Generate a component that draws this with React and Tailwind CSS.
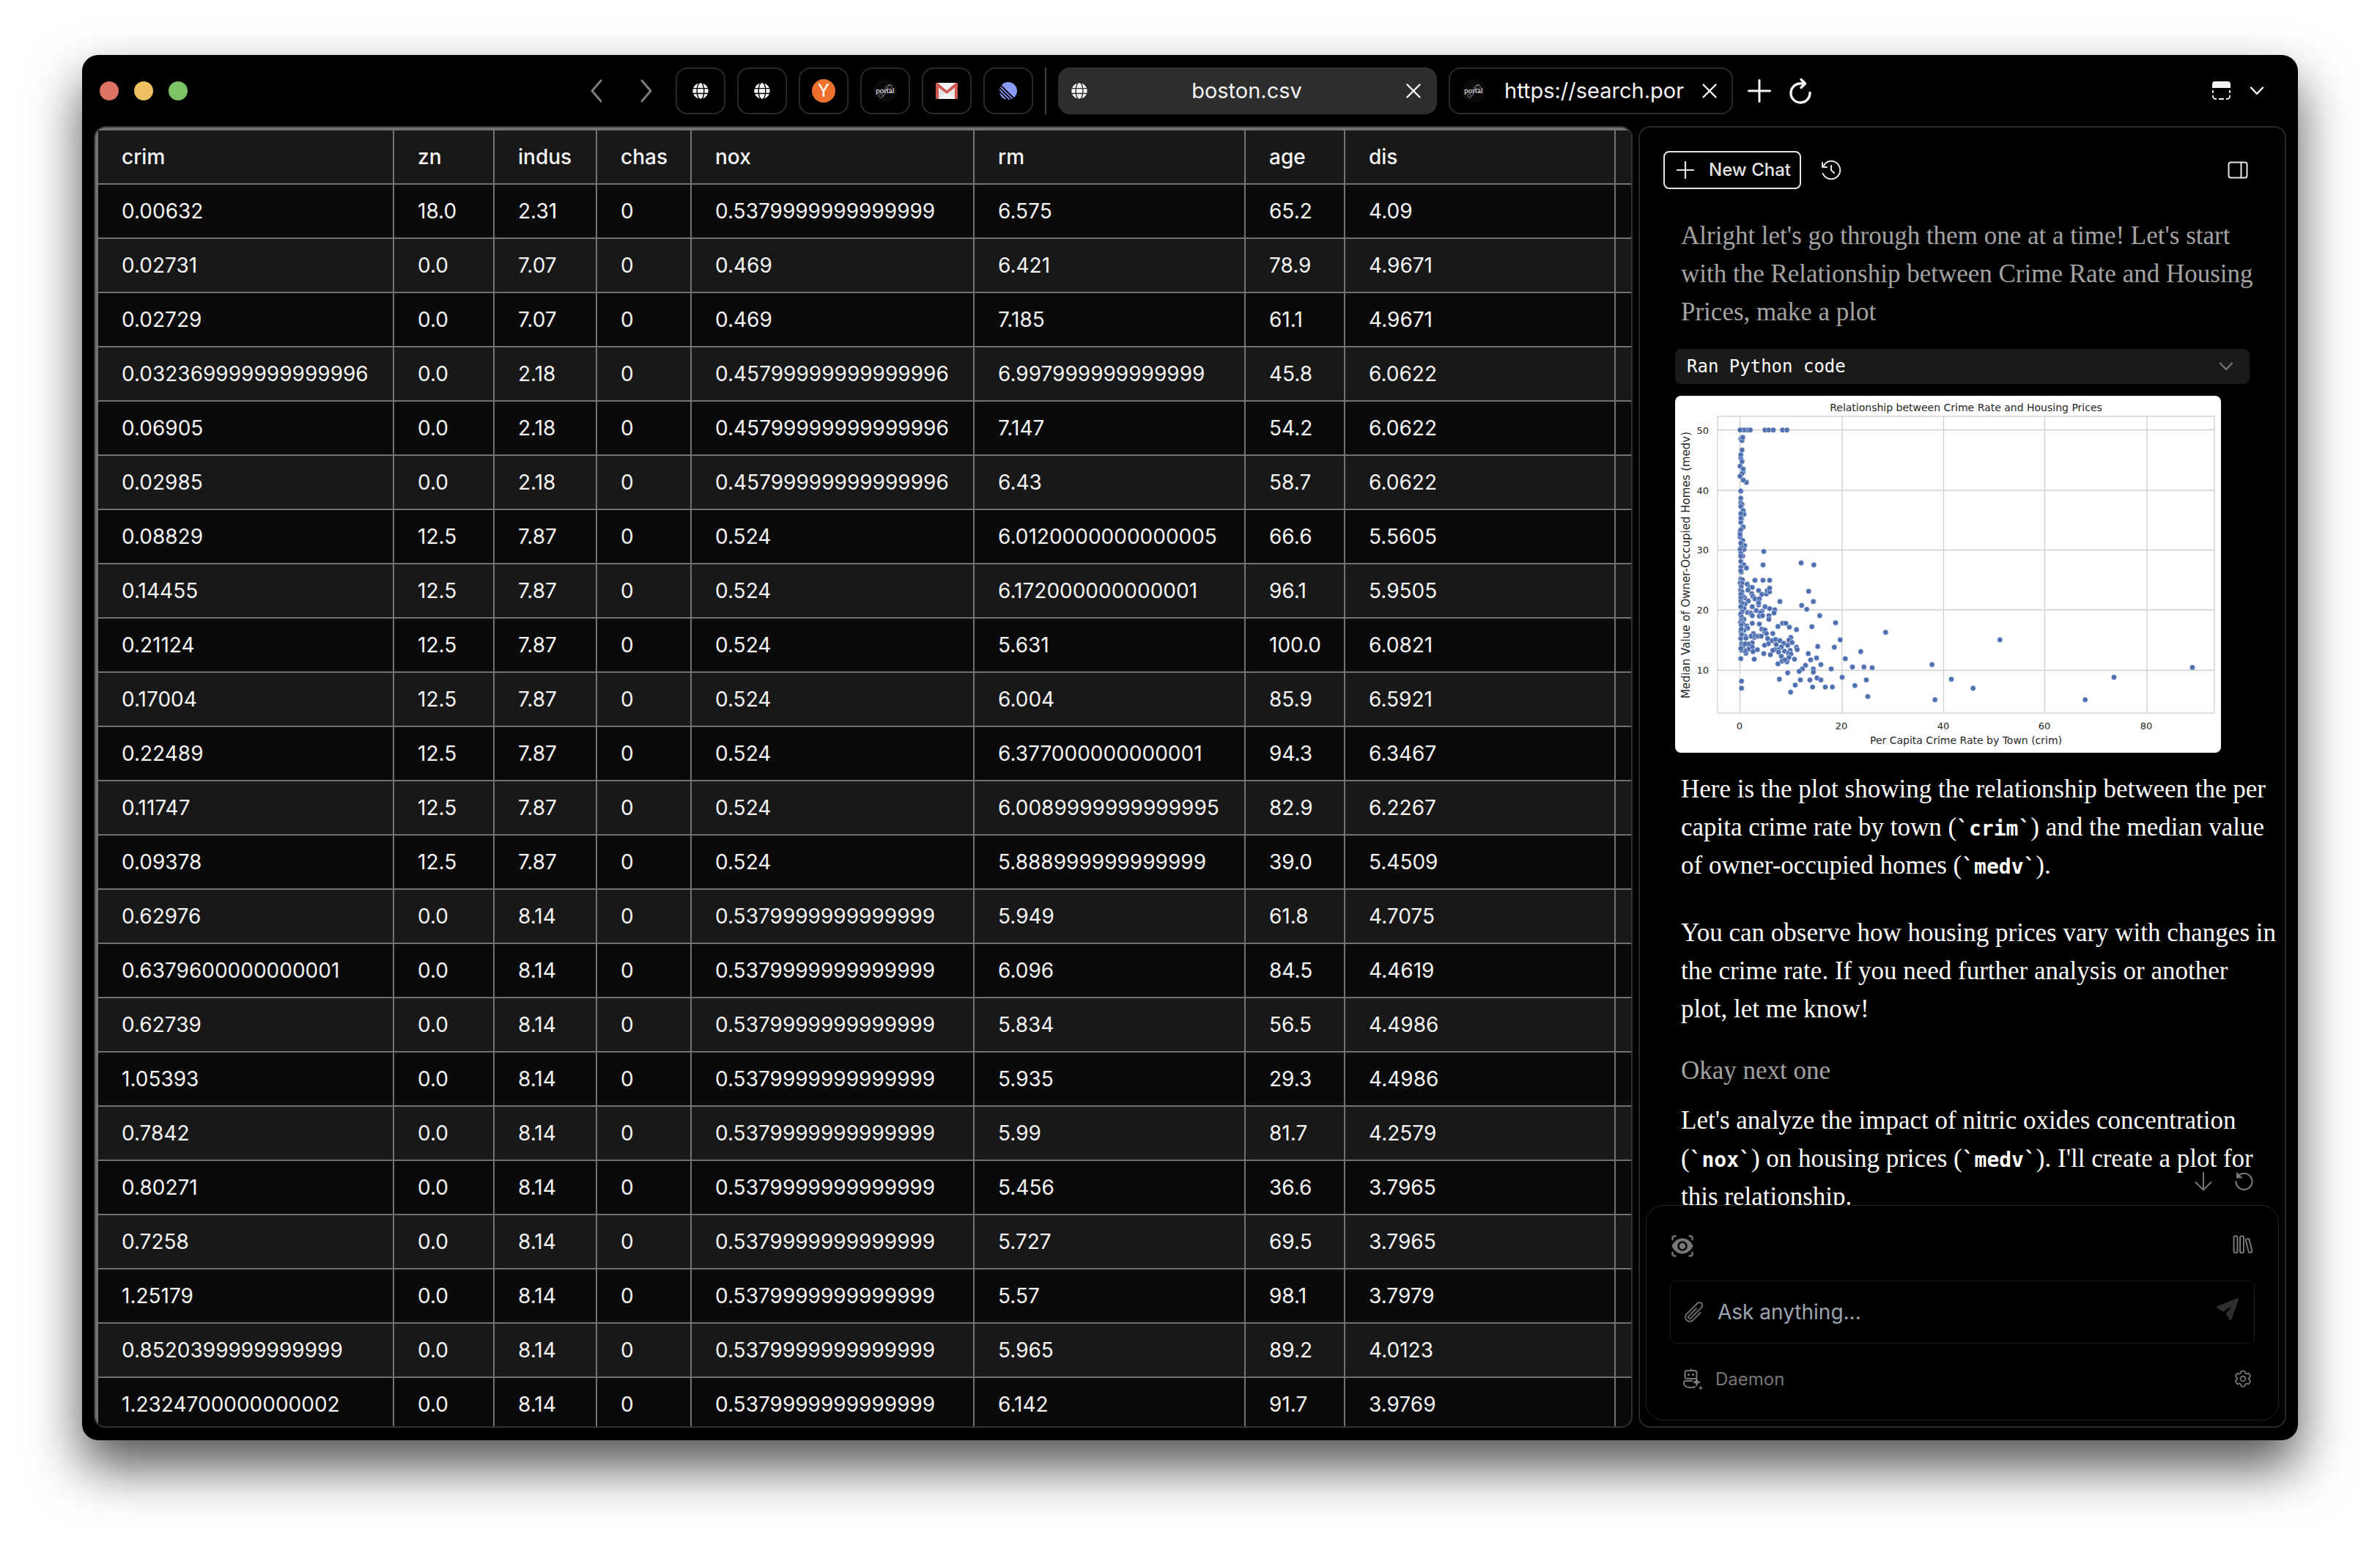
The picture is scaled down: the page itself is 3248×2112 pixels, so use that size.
import { FaGlobe } from 'react-icons/fa';
import { SiLinear } from 'react-icons/si';
import { RxCounterClockwiseClock } from 'react-icons/rx';
import { HiOutlineCog6Tooth, HiOutlinePaperClip } from 'react-icons/hi2';

const columns = ['crim', 'zn', 'indus', 'chas', 'nox', 'rm', 'age', 'dis', ''];

const rows = [
    ['0.00632', '18.0', '2.31', '0', '0.5379999999999999', '6.575', '65.2', '4.09'],
    ['0.02731', '0.0', '7.07', '0', '0.469', '6.421', '78.9', '4.9671'],
    ['0.02729', '0.0', '7.07', '0', '0.469', '7.185', '61.1', '4.9671'],
    ['0.032369999999999996', '0.0', '2.18', '0', '0.45799999999999996', '6.997999999999999', '45.8', '6.0622'],
    ['0.06905', '0.0', '2.18', '0', '0.45799999999999996', '7.147', '54.2', '6.0622'],
    ['0.02985', '0.0', '2.18', '0', '0.45799999999999996', '6.43', '58.7', '6.0622'],
    ['0.08829', '12.5', '7.87', '0', '0.524', '6.0120000000000005', '66.6', '5.5605'],
    ['0.14455', '12.5', '7.87', '0', '0.524', '6.172000000000001', '96.1', '5.9505'],
    ['0.21124', '12.5', '7.87', '0', '0.524', '5.631', '100.0', '6.0821'],
    ['0.17004', '12.5', '7.87', '0', '0.524', '6.004', '85.9', '6.5921'],
    ['0.22489', '12.5', '7.87', '0', '0.524', '6.377000000000001', '94.3', '6.3467'],
    ['0.11747', '12.5', '7.87', '0', '0.524', '6.0089999999999995', '82.9', '6.2267'],
    ['0.09378', '12.5', '7.87', '0', '0.524', '5.888999999999999', '39.0', '5.4509'],
    ['0.62976', '0.0', '8.14', '0', '0.5379999999999999', '5.949', '61.8', '4.7075'],
    ['0.6379600000000001', '0.0', '8.14', '0', '0.5379999999999999', '6.096', '84.5', '4.4619'],
    ['0.62739', '0.0', '8.14', '0', '0.5379999999999999', '5.834', '56.5', '4.4986'],
    ['1.05393', '0.0', '8.14', '0', '0.5379999999999999', '5.935', '29.3', '4.4986'],
    ['0.7842', '0.0', '8.14', '0', '0.5379999999999999', '5.99', '81.7', '4.2579'],
    ['0.80271', '0.0', '8.14', '0', '0.5379999999999999', '5.456', '36.6', '3.7965'],
    ['0.7258', '0.0', '8.14', '0', '0.5379999999999999', '5.727', '69.5', '3.7965'],
    ['1.25179', '0.0', '8.14', '0', '0.5379999999999999', '5.57', '98.1', '3.7979'],
    ['0.8520399999999999', '0.0', '8.14', '0', '0.5379999999999999', '5.965', '89.2', '4.0123'],
    ['1.2324700000000002', '0.0', '8.14', '0', '0.5379999999999999', '6.142', '91.7', '3.9769'],
];

// scatter points, on the 2235 x 1461 grid of the saved figure
const points = [
    [345, 170], [329, 170], [356, 170], [314, 170], [416, 170], [432, 170], [450, 170], [488, 170], [506, 170],
    [317, 207], [322, 213], [325, 200], [322, 252], [317, 284], [317, 271], [322, 299], [314, 318], [327, 342],
    [322, 348], [327, 330], [314, 359], [340, 384], [327, 375], [317, 420], [317, 449], [317, 468], [322, 475],
    [317, 483], [327, 500], [330, 515], [320, 535], [317, 512], [317, 548], [317, 531], [327, 567], [314, 585],
    [317, 578], [314, 608], [314, 597], [325, 622], [333, 643], [330, 659], [319, 648], [317, 633], [314, 660],
    [325, 686], [317, 675], [317, 686], [317, 708], [329, 722], [340, 735], [319, 752], [317, 731], [317, 746],
    [411, 667], [408, 722], [564, 714], [616, 722], [375, 785], [408, 785], [435, 785], [595, 830], [614, 872],
    [566, 888], [587, 904], [640, 930], [705, 959], [608, 975], [910, 998], [724, 1029], [700, 1059], [632, 1056],
    [808, 1077], [745, 1106], [774, 1140], [821, 1140], [855, 1143], [1100, 1130], [831, 1193], [784, 1216],
    [837, 1261], [1112, 1274], [732, 1182], [692, 1222], [663, 1222], [611, 1222], [687, 1148], [645, 1130],
    [627, 1103], [603, 1111], [593, 1085], [582, 1133], [569, 1148], [556, 1158], [614, 1148], [614, 1161],
    [629, 1185], [645, 1193], [600, 1193], [561, 1193], [540, 1214], [521, 1243], [475, 1190], [509, 1164],
    [320, 1198], [320, 1227], [317, 1106], [372, 1108], [317, 780], [324, 783], [314, 796], [322, 797], [343, 801],
    [353, 814], [364, 814], [346, 825], [319, 812], [316, 826], [322, 832], [362, 840], [367, 851], [375, 861],
    [390, 827], [403, 843], [422, 841], [425, 828], [435, 832], [435, 817], [393, 861], [390, 886], [390, 877],
    [333, 857], [348, 870], [325, 850], [317, 843], [317, 858], [317, 872], [335, 882], [322, 880], [319, 895],
    [330, 900], [317, 893], [364, 893], [380, 909], [345, 917], [358, 920], [364, 930], [404, 912], [398, 917],
    [416, 893], [435, 901], [456, 906], [453, 919], [393, 932], [406, 930], [432, 930], [432, 945], [477, 872],
    [322, 914], [316, 924], [320, 936], [330, 945], [319, 949], [316, 958], [325, 962], [319, 968], [341, 972],
    [345, 981], [330, 990], [317, 994], [319, 985], [364, 961], [393, 964], [488, 961], [501, 961], [469, 974],
    [516, 977], [545, 987], [403, 985], [414, 995], [416, 988], [422, 1003], [448, 1003], [369, 1003], [372, 1019],
    [359, 1014], [375, 1012], [388, 1014], [401, 1014], [335, 1014], [338, 1022], [320, 1008], [317, 1024],
    [427, 1024], [446, 1032], [459, 1027], [477, 1032], [430, 1045], [414, 1051], [462, 1048], [522, 1019],
    [514, 1030], [527, 1040], [493, 1043], [483, 1058], [509, 1051], [545, 1059], [548, 1069], [470, 1069],
    [456, 1069], [448, 1072], [472, 1079], [496, 1075], [519, 1072], [512, 1083], [522, 1087], [411, 1085],
    [438, 1090], [483, 1096], [514, 1101], [537, 1108], [486, 1116], [506, 1119], [498, 1111], [469, 1127],
    [364, 1041], [348, 1046], [364, 1058], [385, 1069], [367, 1077], [348, 1067], [338, 1084], [335, 1074],
    [320, 1045], [327, 1053], [335, 1045], [320, 1071], [317, 1064], [1378, 1029], [1179, 1190], [1268, 1227],
    [1727, 1274], [1845, 1182], [2166, 1142],
];

function ChevronIcon({ className, d }) {
    return (
        <svg viewBox="0 0 24 36" fill="none" stroke="currentColor" strokeWidth="3" strokeLinecap="round" strokeLinejoin="round" className={className}>
            <path d={d} />
        </svg>
    );
}

function DownIcon({ className }) {
    return (
        <svg viewBox="0 0 20 12" fill="none" stroke="currentColor" strokeWidth="2.4" strokeLinecap="round" strokeLinejoin="round" className={className}>
            <path d="M2 1.5l8 8.5 8-8.5" />
        </svg>
    );
}

function CloseIcon() {
    return (
        <svg viewBox="0 0 20 20" fill="none" stroke="currentColor" strokeWidth="2.4" strokeLinecap="round" className="h-5 w-5">
            <path d="M1.5 1.5l17 17M18.5 1.5l-17 17" />
        </svg>
    );
}

function PortalLogo() {
    return (
        <span className="relative flex h-8 w-8 items-center justify-center rounded-full bg-[#0a0a0c] font-['Liberation_Serif',serif] text-[11px] leading-none text-white">
            <svg viewBox="0 0 32 32" fill="none" stroke="#8a8a8a" strokeWidth="1" className="absolute inset-0">
                <path d="M12 25c-4 1-6-3-3-5 2-1 4 1 3 3M12 24c6-2 4-12 9-15 3-2 5 0 4 2-1 3-5 3-6 1M16 13c0-3 4-6 8-5" />
            </svg>
            portal
        </span>
    );
}

function GmailLogo() {
    return (
        <svg viewBox="0 0 30 22" className="h-[22px] w-[30px]">
            <rect width="30" height="22" rx="2" fill="#e6e6e6" />
            <path d="M4 22l11-9 11 9z" fill="#f4f4f4" />
            <path d="M2 0h26L15 11z" fill="#f5f5f5" />
            <path d="M2 0a2 2 0 0 0-2 2v18a2 2 0 0 0 2 2h2V6.500l11 8.500 11-8.500V22h2a2 2 0 0 0 2-2V2a2 2 0 0 0-3.300-1.500L15 10.500 3.300.500A2 2 0 0 0 2 0z" fill="#d0574b" />
        </svg>
    );
}

const pinned = [
    { name: 'Page', icon: <FaGlobe className="h-[22px] w-[22px] text-neutral-100" /> },
    { name: 'Page', icon: <FaGlobe className="h-[22px] w-[22px] text-neutral-100" /> },
    {
        name: 'Hacker News',
        icon: <span className="flex h-8 w-8 items-center justify-center rounded-full bg-[#ee722e] text-[24px] leading-none text-white">Y</span>,
    },
    { name: 'Portal', icon: <PortalLogo /> },
    { name: 'Gmail', icon: <GmailLogo /> },
    { name: 'Linear', icon: <SiLinear className="h-6 w-6 text-[#8b9bf8]" /> },
];

function TopBar() {
    return (
        <header className="flex h-[97px] shrink-0 items-center justify-between pr-[46px] pl-6 text-neutral-100">
            <div className="flex items-center gap-[21px]">
                <span className="h-[26px] w-[26px] rounded-full bg-[#dd7265]" />
                <span className="h-[26px] w-[26px] rounded-full bg-[#ecbf63]" />
                <span className="h-[26px] w-[26px] rounded-full bg-[#7dc467]" />
            </div>

            <div className="flex items-center gap-4">
                <button aria-label="Back" className="mr-7 text-[#7d7d7d]">
                    <ChevronIcon className="h-9 w-6" d="M18 4L6 18l12 14" />
                </button>
                <button aria-label="Forward" className="mr-3 text-[#7d7d7d]">
                    <ChevronIcon className="h-9 w-6" d="M6 4l12 14L6 32" />
                </button>

                {pinned.map((tab, i) => (
                    <button key={i} aria-label={tab.name} className="flex h-16 w-[68px] items-center justify-center rounded-2xl border-2 border-[#2a2a2a]">
                        {tab.icon}
                    </button>
                ))}

                <span className="h-16 w-0.5 bg-[#404040]" />

                <div className="flex h-16 w-[517px] items-center rounded-2xl bg-[#2e2e2e] px-[18px]">
                    <FaGlobe className="h-[22px] w-[22px]" />
                    <span className="flex-1 text-center text-[29px]">boston.csv</span>
                    <button aria-label="Close boston.csv" className="pr-1"><CloseIcon /></button>
                </div>

                <div className="flex h-16 w-[388px] items-center rounded-2xl border-2 border-[#2a2a2a] px-4">
                    <PortalLogo />
                    <span className="ml-[26px] flex-1 whitespace-nowrap text-[29px]">https://search.por</span>
                    <button aria-label="Close search tab" className="pr-1"><CloseIcon /></button>
                </div>

                <button aria-label="New tab" className="ml-1">
                    <svg viewBox="0 0 32 32" fill="none" stroke="currentColor" strokeWidth="3" strokeLinecap="round" className="h-8 w-8">
                        <path d="M16 1.500v29M1.500 16h29" />
                    </svg>
                </button>
                <button aria-label="Reload" className="ml-2">
                    <svg viewBox="0 0 32 36" fill="none" stroke="currentColor" strokeWidth="3.400" strokeLinecap="round" strokeLinejoin="round" className="h-9 w-8">
                        <path d="M29 20.500A13 13 0 1 1 16 8h5.500" />
                        <path d="M17 2.500L22.500 8 17 13.500" />
                    </svg>
                </button>
            </div>

            <div className="flex items-center gap-[26px]">
                <button aria-label="Layout">
                    <svg viewBox="0 0 25 25" fill="none" stroke="currentColor" strokeWidth="1.800" className="h-[25px] w-[25px]">
                        <path d="M0 9V4a4 4 0 0 1 4-4h17a4 4 0 0 1 4 4v5z" fill="currentColor" stroke="none" />
                        <path d="M1 12v4M24 12v4M1 19v1.500A3.500 3.500 0 0 0 4.500 24H6M24 19v1.500a3.500 3.500 0 0 1-3.500 3.500H19M9 24h7" />
                    </svg>
                </button>
                <button aria-label="More"><DownIcon className="h-3 w-5" /></button>
            </div>
        </header>
    );
}

function DataTable() {
    return (
        <main className="min-w-0 flex-1 overflow-hidden rounded-2xl border-2 border-[#333] bg-[#0a0a0a]">
            <table className="w-full table-fixed border-separate border-spacing-0 border-t-4 border-l-4 border-[#727272] text-[28px] leading-8 text-neutral-100">
                <colgroup>
                    <col className="w-[404px]" />
                    <col className="w-[137px]" />
                    <col className="w-[140px]" />
                    <col className="w-[129px]" />
                    <col className="w-[386px]" />
                    <col className="w-[370px]" />
                    <col className="w-[136px]" />
                    <col className="w-[369px]" />
                    <col />
                </colgroup>
                <thead>
                    <tr className="bg-[#181818]">
                        {columns.map((name, i) => (
                            <th key={i} className="h-[74px] border-r-2 border-b-2 border-[#727272] pl-8 text-left font-medium last:border-r-0">
                                {name}
                            </th>
                        ))}
                    </tr>
                </thead>
                <tbody>
                    {rows.map((row) => (
                        <tr key={row[0]} className="odd:bg-[#0a0a0a] even:bg-[#181818]">
                            {row.map((value, i) => (
                                <td key={i} className="h-[74px] border-r-2 border-b-2 border-[#727272] pl-8 whitespace-nowrap">
                                    {value}
                                </td>
                            ))}
                            <td className="border-b-2 border-[#727272]" />
                        </tr>
                    ))}
                </tbody>
            </table>
        </main>
    );
}

function CrimePlot() {
    return (
        <svg viewBox="0 0 745 487" className="mt-4 block h-[487px] w-[745px] rounded-lg bg-white font-['DejaVu_Sans',sans-serif]">
            <g stroke="#cfcfcf" strokeWidth="1.300" fill="none">
                <rect x="58" y="28" width="678" height="405" />
                <path d="M88.500 28v405M228 28v405M366.500 28v405M504.500 28v405M644 28v405" />
                <path d="M58 46.500h678M58 129h678M58 210.500h678M58 292h678M58 374.500h678" />
            </g>
            <svg x="0" y="0" width="745" height="487" viewBox="48 30 2235 1461">
                {points.map(([x, y], i) => (
                    <circle key={i} cx={x} cy={y} r="11" fill="#4f70b0" stroke="#fff" strokeWidth="1.500" />
                ))}
            </svg>
            <g fill="#262626" fontSize="14" textAnchor="middle">
                <text x="397" y="21">Relationship between Crime Rate and Housing Prices</text>
                <text x="397" y="475">Per Capita Crime Rate by Town (crim)</text>
                <text transform="translate(20 231) rotate(-90)" fontSize="15">Median Value of Owner-Occupied Homes (medv)</text>
            </g>
            <g fill="#262626" fontSize="13" textAnchor="middle">
                <text x="88" y="455">0</text>
                <text x="227" y="455">20</text>
                <text x="366" y="455">40</text>
                <text x="504" y="455">60</text>
                <text x="643" y="455">80</text>
            </g>
            <g fill="#262626" fontSize="13" textAnchor="end">
                <text x="46" y="52">50</text>
                <text x="46" y="134">40</text>
                <text x="46" y="215">30</text>
                <text x="46" y="297">20</text>
                <text x="46" y="379">10</text>
            </g>
        </svg>
    );
}

function Code({ children }) {
    return <code className="font-['DejaVu_Sans_Mono',monospace] text-[28px] leading-none font-bold">`{children}`</code>;
}

function Messages() {
    return (
        <div className="relative min-h-0 flex-1 overflow-hidden pl-12">
            <div className="font-[Georgia,'Liberation_Serif',serif] text-[35px] leading-[52px] whitespace-nowrap text-white">
                <p className="mt-[38px] pl-2 text-[#a3a3a3]">
                    Alright let's go through them one at a time! Let's start<br />
                    with the Relationship between Crime Rate and Housing<br />
                    Prices, make a plot
                </p>

                <button className="mt-6 flex h-12 w-[784px] items-center justify-between rounded-lg bg-[#1a1a1a] pr-[22px] pl-4 font-['DejaVu_Sans_Mono',monospace] text-[24px]">
                    Ran Python code
                    <DownIcon className="h-3 w-5 text-[#71717a]" />
                </button>
                <CrimePlot />

                <p className="mt-6 pl-2">
                    Here is the plot showing the relationship between the per<br />
                    capita crime rate by town (<Code>crim</Code>) and the median value<br />
                    of owner-occupied homes (<Code>medv</Code>).
                </p>
                <p className="mt-10 pl-2">
                    You can observe how housing prices vary with changes in<br />
                    the crime rate. If you need further analysis or another<br />
                    plot, let me know!
                </p>
                <p className="mt-8 pl-2 text-[#a3a3a3]">Okay next one</p>
                <p className="mt-4 pl-2">
                    Let's analyze the impact of nitric oxides concentration<br />
                    (<Code>nox</Code>) on housing prices (<Code>medv</Code>). I'll create a plot for<br />
                    this relationship.
                </p>
            </div>

            {/* Scroll / retry controls float over the last message */}
            <div className="absolute right-10 bottom-4 flex gap-7 bg-gradient-to-t from-black from-50% to-transparent text-[#777]">
                <button aria-label="Scroll to bottom">
                    <svg viewBox="0 0 26 30" fill="none" stroke="currentColor" strokeWidth="2" strokeLinecap="round" strokeLinejoin="round" className="h-[30px] w-[26px]">
                        <path d="M13 2v23M2.500 15L13 25.500 23.500 15" />
                    </svg>
                </button>
                <button aria-label="Retry">
                    <svg viewBox="0 0 30 30" fill="none" stroke="currentColor" strokeWidth="2.200" strokeLinecap="round" className="h-[30px] w-[30px]">
                        <path d="M3.500 14A11 11 0 1 0 6 7" />
                        <path d="M4.500 2v7h7z" fill="currentColor" strokeWidth="1" strokeLinejoin="round" />
                    </svg>
                </button>
            </div>
        </div>
    );
}

function Composer() {
    return (
        <form className="mx-2 mb-2 shrink-0 rounded-3xl border border-[#222] bg-black px-[34px] pt-10 pb-10 text-[#777]">
            <div className="flex items-center justify-between">
                <button type="button" aria-label="Look at page">
                    <svg viewBox="0 0 30 30" fill="none" stroke="currentColor" strokeWidth="2.500" strokeLinecap="round" className="h-[30px] w-[30px]">
                        <path d="M1.500 6V4a2.500 2.500 0 0 1 2.500-2.500h1.500M24.500 1.500H26A2.500 2.500 0 0 1 28.500 4v2M28.500 24v2a2.500 2.500 0 0 1-2.500 2.500h-1.500M5.500 28.500H4A2.500 2.500 0 0 1 1.500 26v-2" />
                        <path d="M15 4.500C8.500 4.500 3 9 .500 15 3 21 8.500 25.500 15 25.500S27 21 29.500 15C27 9 21.500 4.500 15 4.500z" fill="currentColor" stroke="none" />
                        <circle cx="15" cy="15" r="5.500" stroke="#000" strokeWidth="2.500" />
                    </svg>
                </button>
                <button type="button" aria-label="Library" className="self-start">
                    <svg viewBox="0 0 28 26" fill="none" stroke="currentColor" strokeWidth="2" className="h-[26px] w-7">
                        <rect x="1.500" y="1.500" width="5" height="22.500" rx="1.800" />
                        <rect x="10" y="1.500" width="5" height="22.500" rx="1.800" />
                        <rect x="19.700" y="5" width="4.800" height="19" rx="1.800" transform="rotate(-14 22 14.500)" />
                    </svg>
                </button>
            </div>

            <div className="-mx-0.5 mt-8 flex h-[86px] items-center rounded-lg border border-[#1c1c1c] pr-5 pl-4">
                <HiOutlinePaperClip className="h-8 w-8 text-[#6b6b6b]" />
                <input
                    aria-label="Message"
                    placeholder="Ask anything..."
                    className="ml-4 min-w-0 flex-1 bg-transparent text-[28px] outline-none placeholder:text-[#9ca3af]"
                />
                <button type="submit" aria-label="Send" className="mb-2">
                    <svg viewBox="0 0 32 32" fill="#2e2e2e" className="h-8 w-8">
                        <path d="M29 1.200c1.200-.4 2.200.6 1.800 1.800L21.500 30c-.5 1.400-2.400 1.500-3.100.2L13.500 22l6.200-6.600a1.200 1.200 0 0 0-1.700-1.700L10.500 19.800 1.800 15c-1.300-.7-1.100-2.600.2-3.100z" />
                    </svg>
                </button>
            </div>

            <div className="mt-[34px] flex items-center justify-between">
                <button type="button" className="flex items-center gap-4 pl-4 text-[24px] leading-[30px]">
                    <svg viewBox="0 0 28 30" fill="none" stroke="currentColor" strokeWidth="2" strokeLinecap="round" className="h-[30px] w-7">
                        <path d="M10.500 1v2M5 3h11a2.500 2.500 0 0 1 2.500 2.500v6A2.500 2.500 0 0 1 16 14H5a2.500 2.500 0 0 1-2.500-2.500v-6A2.500 2.500 0 0 1 5 3z" />
                        <path d="M12 17H3.500C1.800 17 1 18 1 19.500 1 24 5 26 10.500 26c2.200 0 4-.4 5.500-1" />
                        <circle cx="7.500" cy="8.500" r="1.600" fill="currentColor" stroke="none" />
                        <circle cx="13.500" cy="8.500" r="1.600" fill="currentColor" stroke="none" />
                        <path d="M18.500 12.500l1.800 4.400 4.400 1.800-4.400 1.800-1.800 4.400-1.800-4.400-4.400-1.800 4.400-1.800zM24 23.500l1 2.200 2.200 1-2.200 1-1 2.200-1-2.200-2.200-1 2.200-1z" fill="currentColor" stroke="none" />
                    </svg>
                    Daemon
                </button>
                <button type="button" aria-label="Settings" className="self-start"><HiOutlineCog6Tooth className="h-7 w-7" /></button>
            </div>
        </form>
    );
}

function ChatPanel() {
    return (
        <aside className="flex w-[884px] shrink-0 flex-col overflow-hidden rounded-2xl border-2 border-[#2a2a2a]">
            <div className="flex items-center pt-8 pr-[50px] pl-8 text-neutral-200">
                <button className="flex h-[52px] items-center gap-5 rounded-lg border-2 border-neutral-200 pr-3 pl-4 text-[24px] font-medium">
                    <svg viewBox="0 0 24 24" fill="none" stroke="currentColor" strokeWidth="2.200" strokeLinecap="round" className="h-6 w-6">
                        <path d="M12 1v22M1 12h22" />
                    </svg>
                    New Chat
                </button>
                <button aria-label="History" className="ml-[26px]"><RxCounterClockwiseClock className="h-[30px] w-[30px]" /></button>
                <button aria-label="Toggle panel" className="ml-auto">
                    <svg viewBox="0 0 28 24" fill="none" stroke="currentColor" strokeWidth="2" className="h-6 w-7">
                        <rect x="1.500" y="1.500" width="25" height="21" rx="3" />
                        <path d="M18.500 1.500v21" />
                    </svg>
                </button>
            </div>
            <Messages />
            <Composer />
        </aside>
    );
}

export default function App() {
    return (
        <div className="flex h-screen flex-col overflow-hidden bg-white px-28 pt-[75px] pb-[147px] font-[Inter,sans-serif]">
            <div className="flex min-h-0 flex-1 flex-col overflow-hidden rounded-[22px] bg-black shadow-[0_36px_72px_rgba(0,0,0,0.68)]">
                <TopBar />
                <div className="flex min-h-0 flex-1 gap-2 px-4 pb-[17px]">
                    <DataTable />
                    <ChatPanel />
                </div>
            </div>
        </div>
    );
}
